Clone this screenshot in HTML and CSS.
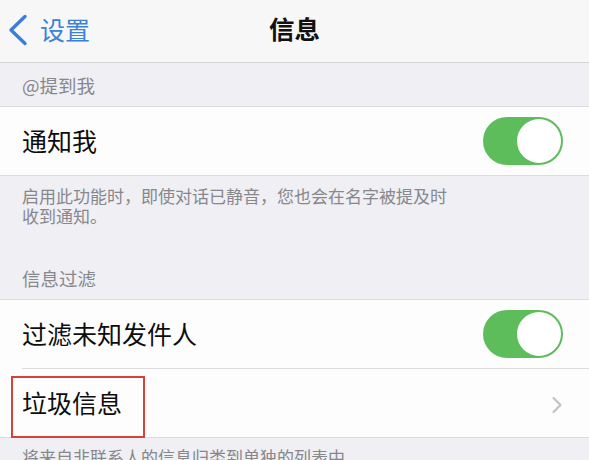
FILE: index.html
```html
<!DOCTYPE html>
<html lang="zh-CN">
<head>
<meta charset="utf-8">
<title>信息</title>
<link rel="stylesheet" href="styles.css">
</head>
<body>
<header class="nav">
  <div class="back">
    <svg class="back-icon" width="20" height="32" viewBox="0 0 20 32"><path d="M17 2.5 L3 16 L17 29.5" fill="none" stroke="#3a7ed8" stroke-width="3.4" stroke-linecap="round" stroke-linejoin="round"/></svg>
    <span class="back-text">设置</span>
  </div>
  <div class="title">信息</div>
  <div class="spacer"></div>
</header>

<div class="section-header">@提到我</div>
<div class="group">
  <div class="row">
    <span class="label">通知我</span>
    <span class="toggle"><span class="knob"></span></span>
  </div>
</div>
<div class="section-footer"><p class="footer-text">启用此功能时，即使对话已静音，您也会在名字被提及时<br>收到通知。</p></div>

<div class="section-header">信息过滤</div>
<div class="group">
  <div class="row">
    <span class="label">过滤未知发件人</span>
    <span class="toggle"><span class="knob"></span></span>
  </div>
  <div class="separator"></div>
  <div class="row row-link">
    <span class="label">垃圾信息</span>
    <svg class="chevron" width="12" height="18" viewBox="0 0 12 18"><path d="M2.5 2 L9.5 9 L2.5 16" fill="none" stroke="#c3c3c7" stroke-width="2.2" stroke-linecap="round" stroke-linejoin="round"/></svg>
    <span class="highlight"></span>
  </div>
</div>
<div class="section-footer last"><p class="footer-text">将来自非联系人的信息归类到单独的列表中。</p></div>
</body>
</html>
```

FILE: styles.css
```css
html, body {
  margin: 0;
  padding: 0;
}
body {
  background: #efeff4;
  font-family: "Noto Sans CJK SC", "Noto Sans", sans-serif;
  color: #0d0d0d;
  width: 589px;
  height: 460px;
  overflow: hidden;
}
.nav {
  height: 62px;
  background: #f7f7f8;
  border-bottom: 1px solid #d3d3d7;
  display: grid;
  grid-template-columns: 1fr auto 1fr;
  align-items: center;
}
.back {
  display: flex;
  align-items: center;
  padding-left: 8px;
  gap: 12px;
}
.back-icon {
  display: block;
  margin-top: -3px;
}
.back-text {
  font-size: 25px;
  line-height: 30px;
  color: #3c80d8;
  margin-top: -4px;
}
.title {
  font-size: 25.5px;
  line-height: 30px;
  font-weight: 700;
  color: #111;
  margin-top: -6px;
}
.section-header {
  height: 43px;
  display: flex;
  align-items: center;
  padding: 0 22px;
  font-size: 18.5px;
  color: #87878c;
}
.group {
  background: #fdfdfd;
  border-top: 1px solid #dcdce0;
  border-bottom: 1px solid #dcdce0;
}
.row {
  height: 68px;
  display: flex;
  align-items: center;
  justify-content: space-between;
  padding: 0 26px 0 22px;
  position: relative;
}
.group:first-of-type .row {
  height: 67px;
}
.label {
  font-size: 25px;
  line-height: 30px;
  color: #0d0d0d;
  margin-top: -2px;
}
.toggle {
  width: 80px;
  height: 48px;
  border-radius: 24px;
  background: #5dbd5b;
  display: flex;
  align-items: center;
  justify-content: flex-end;
  padding-right: 2px;
  box-sizing: border-box;
}
.knob {
  width: 44px;
  height: 44px;
  border-radius: 50%;
  background: #ffffff;
}
.separator {
  height: 1px;
  background: #dcdce0;
  margin-left: 22px;
}
.chevron {
  display: block;
  margin-top: 3px;
}
.highlight {
  position: absolute;
  left: 11px;
  top: 7px;
  width: 130px;
  height: 58px;
  border: 2px solid #d8413a;
  pointer-events: none;
}
.section-footer {
  padding: 10px 22px 30px;
}
.section-footer.last {
  padding-top: 9px;
}
.footer-text {
  margin: 0;
  font-size: 17px;
  line-height: 20px;
  color: #87878c;
  white-space: nowrap;
}
```
